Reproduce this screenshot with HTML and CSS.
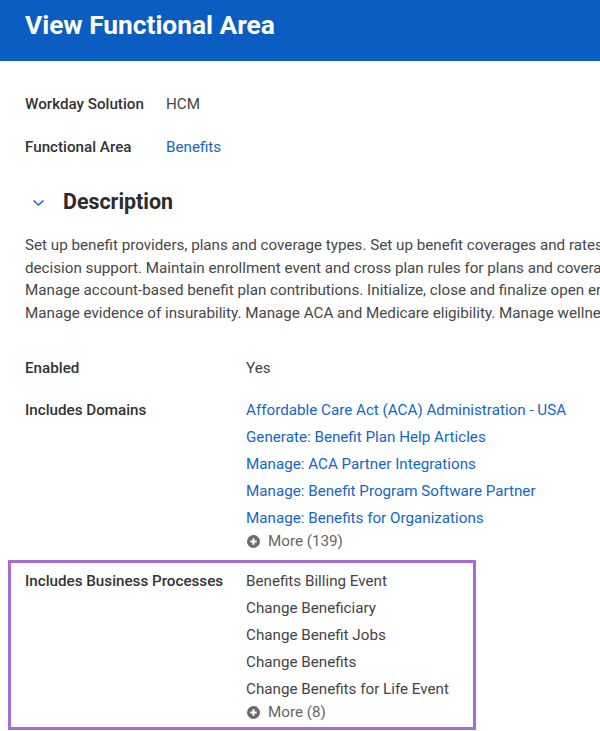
FILE: index.html
```html
<!DOCTYPE html>
<html lang="en">
  <head>
    <meta charset="UTF-8" />
    <meta name="viewport" content="width=device-width, initial-scale=1.0" />
    <title>View Functional Area</title>
    <link rel="stylesheet" href="styles.css">
  </head>
  <body>
    <header class="page-header">
      <h1>View Functional Area</h1>
    </header>
    <main class="content">
      <div class="summary">
        <div class="label">Workday Solution</div>
        <div class="value">HCM</div>
        <div class="label">Functional Area</div>
        <div class="value"><a href="#">Benefits</a></div>
      </div>

      <h2 class="section-title">
        <svg class="chevron" width="13" height="8" viewBox="0 0 13 8">
          <path d="M1.5 1.5 L6.5 6 L11.5 1.5" fill="none" stroke="#1a6dcc" stroke-width="1.6" />
        </svg>
        Description
      </h2>
      <p class="description">
        Set up benefit providers, plans and coverage types. Set up benefit coverages and rates for benefit<br />
        decision support. Maintain enrollment event and cross plan rules for plans and coverages.<br />
        Manage account-based benefit plan contributions. Initialize, close and finalize open enrollment.<br />
        Manage evidence of insurability. Manage ACA and Medicare eligibility. Manage wellness programs.
      </p>

      <div class="field first">
        <div class="label">Enabled</div>
        <div class="value">Yes</div>
      </div>

      <div class="field">
        <div class="label">Includes Domains</div>
        <ul class="value-list">
          <li><a href="#">Affordable Care Act (ACA) Administration - USA</a></li>
          <li><a href="#">Generate: Benefit Plan Help Articles</a></li>
          <li><a href="#">Manage: ACA Partner Integrations</a></li>
          <li><a href="#">Manage: Benefit Program Software Partner</a></li>
          <li><a href="#">Manage: Benefits for Organizations</a></li>
          <li class="more">
            <svg width="13" height="13" viewBox="0 0 13 13">
              <circle cx="6.5" cy="6.5" r="6.5" fill="#6b6b6b" />
              <path d="M6.5 3.3 V9.7 M3.3 6.5 H9.7" stroke="#fff" stroke-width="2" />
            </svg>
            More (139)
          </li>
        </ul>
      </div>

      <div class="field highlight">
        <div class="label">Includes Business Processes</div>
        <ul class="value-list">
          <li>Benefits Billing Event</li>
          <li>Change Beneficiary</li>
          <li>Change Benefit Jobs</li>
          <li>Change Benefits</li>
          <li>Change Benefits for Life Event</li>
          <li class="more">
            <svg width="13" height="13" viewBox="0 0 13 13">
              <circle cx="6.5" cy="6.5" r="6.5" fill="#6b6b6b" />
              <path d="M6.5 3.3 V9.7 M3.3 6.5 H9.7" stroke="#fff" stroke-width="2" />
            </svg>
            More (8)
          </li>
        </ul>
      </div>
    </main>
  </body>
</html>
```

FILE: styles.css
```css
body {
  font-family: Roboto, "Liberation Sans", sans-serif;
  font-size: 15.2px;
  color: #3a3a3a;
  background-color: #ffffff;
  margin: 0;
  overflow: hidden;
}
a {
  color: #1466c8;
  text-decoration: none;
}
.page-header {
  height: 61px;
  background-color: #0b5dc1;
  padding-left: 25px;
}
.page-header h1 {
  margin: 0;
  font-size: 26.3px;
  font-weight: 700;
  line-height: 50px;
  color: #ffffff;
}
.content {
  padding-left: 25px;
}
.summary {
  display: grid;
  grid-template-columns: 141px auto;
  row-gap: 23px;
  line-height: 20px;
  margin-top: 33px;
}
.label {
  font-weight: 500;
  color: #333333;
}
.value {
  color: #444444;
}
.section-title {
  display: flex;
  align-items: center;
  gap: 18px;
  margin: 31px 0 0 7px;
  font-size: 21.4px;
  font-weight: 700;
  line-height: 28px;
  color: #2b2b2b;
}
.chevron {
  margin-top: 2px;
}
.description {
  margin: 18px 0 0;
  white-space: nowrap;
  line-height: 22.5px;
  color: #474747;
}
.field {
  display: flex;
  line-height: 27px;
  margin-top: 15px;
}
.field.first {
  margin-top: 31px;
}
.field .label {
  width: 221px;
  flex-shrink: 0;
}
.value-list {
  list-style: none;
  margin: 0;
  padding: 0;
}
.value-list li {
  color: #444444;
}
.value-list .more {
  display: flex;
  align-items: center;
  gap: 8px;
  line-height: 19px;
  color: #666666;
  padding-left: 1px;
}
.highlight {
  width: 448px;
  margin-left: -17px;
  margin-top: 9px;
  padding: 5px 0 5px 14px;
  border: 3px solid #a86bd4;
}
```
